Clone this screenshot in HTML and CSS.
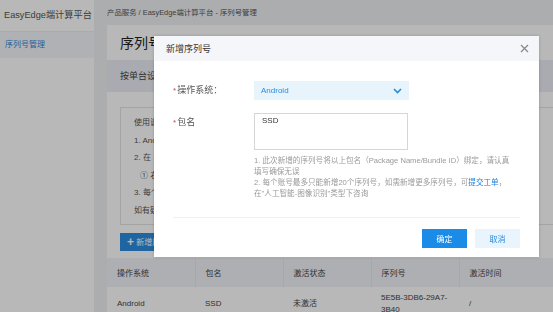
FILE: index.html
```html
<!DOCTYPE html>
<html lang="zh-CN">
<head>
    <meta charset="UTF-8">
    <title>序列号管理</title>
    <link rel="stylesheet" href="styles.css">
</head>
<body>
    <div class="app">
        <aside class="sidebar">
            <div class="sidebar-title">EasyEdge端计算平台</div>
            <div class="sidebar-item active">序列号管理</div>
        </aside>

        <main class="main">
            <div class="breadcrumb">产品服务 / EasyEdge端计算平台 - 序列号管理</div>
            <div class="card">
                <h1 class="card-title">序列号管理</h1>
                <div class="tab-band">按单台设备激活的序列号</div>
                <div class="card-body">
                    <div class="notice">
                        <p>使用说明</p>
                        <p>1. Android 设备需要绑定包名后使用</p>
                        <p>2. 在 <span class="link">SDK</span> 初始化时传入序列号</p>
                        <p class="indent">① 右侧操作栏可查看序列号详情</p>
                        <p>3. 每个序列号只能激活一台设备</p>
                        <p>如有疑问请提交工单咨询</p>
                    </div>
                    <button class="btn-add"><span class="plus">+</span> 新增序列号</button>
                </div>
                <table class="table">
                    <colgroup>
                        <col class="col">
                        <col class="col">
                        <col class="col">
                        <col class="col">
                        <col>
                    </colgroup>
                    <thead>
                        <tr>
                            <th>操作系统</th>
                            <th>包名</th>
                            <th>激活状态</th>
                            <th>序列号</th>
                            <th>激活时间</th>
                        </tr>
                    </thead>
                    <tbody>
                        <tr>
                            <td>Android</td>
                            <td>SSD</td>
                            <td>未激活</td>
                            <td>5E5B-3DB6-29A7-<br>3B40</td>
                            <td>/</td>
                        </tr>
                    </tbody>
                </table>
            </div>
        </main>
    </div>

    <div class="mask"></div>

    <div class="modal">
        <div class="modal-header">
            <span>新增序列号</span>
            <svg class="modal-close" width="9" height="9" viewBox="0 0 9 9">
                <path d="M1 1 L8 8 M8 1 L1 8" stroke="#8a8a8a" stroke-width="1.3" fill="none"/>
            </svg>
        </div>
        <div class="modal-body">
            <div class="form-row">
                <label class="form-label"><i>*</i>操作系统：</label>
                <div class="select">
                    <span>Android</span>
                    <svg width="9" height="6" viewBox="0 0 9 6">
                        <path d="M1 1 L4.5 4.5 L8 1" stroke="#2a8ae2" stroke-width="1.6" fill="none"/>
                    </svg>
                </div>
            </div>
            <div class="form-row">
                <label class="form-label"><i>*</i>包名</label>
                <div class="field">
                    <div class="textarea">SSD</div>
                    <div class="help">
                        <p>1. 此次新增的序列号将以上包名（Package Name/Bundle ID）绑定，请认真填写确保无误</p>
                        <p>2. 每个账号最多只能新增20个序列号，如需新增更多序列号，可<a class="link">提交工单</a>，在"人工智能-图像识别"类型下咨询</p>
                    </div>
                </div>
            </div>
        </div>
        <div class="modal-footer">
            <button class="btn btn-primary">确定</button>
            <button class="btn btn-light">取消</button>
        </div>
    </div>
</body>
</html>
```

FILE: styles.css
```css
* {
    margin: 0;
    padding: 0;
    box-sizing: border-box;
    font-family: 'Liberation Sans', 'Noto Sans CJK SC', sans-serif;
}

body {
    width: 553px;
    height: 312px;
    overflow: hidden;
    background-color: #eef0f3;
    color: #333;
}

.app {
    display: flex;
    height: 312px;
}

.sidebar {
    width: 94px;
    flex-shrink: 0;
    background-color: #fff;
}

.sidebar-title {
    height: 32px;
    line-height: 31px;
    padding-left: 4px;
    font-size: 9.2px;
    color: #555;
    border-bottom: 1px solid #eee;
    white-space: nowrap;
}

.sidebar-item {
    height: 26px;
    line-height: 25px;
    padding-left: 5px;
    font-size: 8px;
}

.sidebar-item.active {
    background-color: #f4f6fa;
    color: #2f86d8;
}

.main {
    flex: 1;
    padding-left: 13px;
    min-width: 0;
}

.breadcrumb {
    height: 25px;
    line-height: 26px;
    font-size: 7.4px;
    color: #555;
    white-space: nowrap;
}

.card {
    background-color: #fff;
    width: 460px;
}

.card-title {
    height: 35px;
    line-height: 36px;
    padding-left: 13px;
    font-size: 14px;
    font-weight: normal;
    color: #222;
}

.tab-band {
    height: 32px;
    line-height: 32px;
    padding-left: 13px;
    font-size: 9px;
    color: #444;
    background-color: #eceef4;
}

.card-body {
    padding: 15px 13px 7px;
}

.notice {
    border: 1px solid #e4e4e4;
    height: 118px;
    padding: 6px 13px;
    font-size: 8px;
    color: #555;
    line-height: 17.5px;
}

.notice .indent {
    padding-left: 6px;
}

.link {
    color: #1c80db;
    text-decoration: none;
}

.btn-add {
    margin-top: 8px;
    height: 18px;
    width: 70px;
    border: none;
    background-color: #2b8de0;
    color: #fff;
    font-size: 8px;
    text-align: left;
    padding-left: 7px;
}

.btn-add .plus {
    font-size: 12px;
    font-weight: bold;
    vertical-align: -1px;
}

.table {
    width: 100%;
    table-layout: fixed;
    border-collapse: collapse;
    font-size: 8px;
    color: #444;
}

.table .col {
    width: 88px;
}

.table th {
    height: 29px;
    background-color: #f2f3f7;
    font-weight: normal;
    text-align: left;
    padding-left: 10px;
    border-right: 1px solid #e8e9ee;
}

.table td {
    height: 30px;
    padding-left: 10px;
    line-height: 12px;
    padding-top: 3px;
}

.mask {
    position: fixed;
    inset: 0;
    background-color: rgba(0, 0, 0, 0.28);
}

.modal {
    position: absolute;
    left: 154px;
    top: 36px;
    width: 385px;
    height: 221px;
    background-color: #fff;
    box-shadow: 0 0 3px rgba(0, 0, 0, 0.2);
}

.modal-header {
    height: 25px;
    background-color: #f5f6fa;
    display: flex;
    align-items: center;
    justify-content: space-between;
    padding: 0 10px 0 12px;
    font-size: 9px;
    color: #333;
}

.modal-body {
    margin: 0 19px;
    padding-top: 20px;
    height: 157px;
    border-bottom: 1px solid #f0f0f0;
}

.form-row {
    display: flex;
}

.form-row + .form-row {
    margin-top: 13px;
}

.form-label {
    width: 81px;
    font-size: 9px;
    color: #555;
    line-height: 19px;
    flex-shrink: 0;
}

.form-label i {
    color: #e0403a;
    font-style: normal;
    font-size: 8px;
    margin-right: 1px;
}

.select {
    width: 155px;
    height: 19px;
    background-color: #e8f4fc;
    display: flex;
    align-items: center;
    justify-content: space-between;
    padding: 0 7px;
    font-size: 8px;
    color: #2a8ae2;
}

.field {
    width: 262px;
}

.textarea {
    width: 154px;
    height: 37px;
    border: 1px solid #d6d6d6;
    font-size: 8px;
    color: #333;
    padding: 2px 7px;
}

.help {
    margin-top: 5px;
    font-size: 7.6px;
    line-height: 11px;
    color: #9a9a9a;
}

.modal-footer {
    display: flex;
    justify-content: flex-end;
    gap: 8px;
    padding: 11px 19px 0 0;
}

.btn {
    width: 45px;
    height: 19px;
    border: none;
    font-size: 8px;
}

.btn-primary {
    background-color: #1b8be8;
    color: #fff;
}

.btn-light {
    background-color: #eaf4fd;
    color: #2a8ae2;
}
```
